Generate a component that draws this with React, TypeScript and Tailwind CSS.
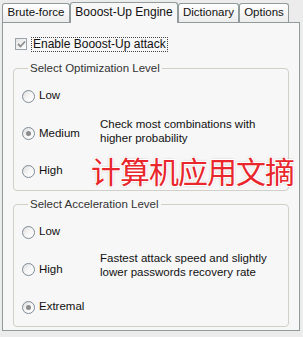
import React from 'react';

const tabs = [
    { label: 'Brute-force', w: 'w-[68px]' },
    { label: 'Booost-Up Engine', w: 'w-[108px]', active: true },
    { label: 'Dictionary', w: 'w-[61px]' },
    { label: 'Options', w: 'w-[50px]' },
];

function Radio({ checked }: { checked?: boolean }) {
    return (
        <span className="w-[13px] h-[13px] rounded-full border border-[#7f8a96] bg-gradient-to-br from-[#dcdcdc] via-[#f6f6f6] to-white flex items-center justify-center shrink-0">
            {checked && <span className="w-[5px] h-[5px] rounded-full bg-[#8c8c8c]" />}
        </span>
    );
}

function Group({ title, options, desc, descClass }: { title: string; options: { label: string; checked?: boolean }[]; desc: string[]; descClass: string }) {
    return (
        <fieldset className="border border-[#d0d0c8] rounded-[4px] mx-[10px] pl-[8px] pr-2 pt-[14px] pb-[12px]">
            <legend className="ml-[6px] px-[2px] text-[#333] leading-[13px]">{title}</legend>
            <div className="flex flex-col gap-[23.5px]">
                {options.map((o, i) => (
                    <div key={o.label} className="flex items-center h-[14px]">
                        <div className="w-[78px] flex items-center gap-[4px]">
                            <Radio checked={o.checked} />
                            <span>{o.label}</span>
                        </div>
                        {i === 1 && (
                            <div className={`leading-[14px] whitespace-nowrap ${descClass}`}>
                                {desc.map(d => <div key={d}>{d}</div>)}
                            </div>
                        )}
                    </div>
                ))}
            </div>
        </fieldset>
    );
}

export default function App() {
    return (
        <div className="relative w-[303px] h-[337px] bg-[#ececec] pt-[3px] pl-[2px] text-[11.5px] text-[#111] overflow-hidden" style={{ fontFamily: '"Liberation Sans", Arial, sans-serif' }}>
            {/* Tab strip */}
            <div className="flex items-end h-[19px] relative z-10">
                {tabs.map(t => (
                    <div
                        key={t.label}
                        className={
                            t.active
                                ? `${t.w} h-[21px] -mb-[1px] border border-b-0 border-[#919b9c] rounded-t-[3px] bg-[#f7f7f7] flex items-center justify-center pb-[2px] text-[12px]`
                                : `${t.w} h-[19px] border border-b-0 border-[#919b9c] rounded-t-[3px] bg-gradient-to-b from-white to-[#ececec] flex items-center justify-center`
                        }
                    >
                        {t.label}
                    </div>
                ))}
            </div>

            {/* Panel */}
            <div className="w-[298px] h-[309px] border border-[#919b9c] bg-[#f7f7f7] pt-[14px]">
                <div className="flex items-center gap-[5px] pl-[12px] h-[14px]">
                    <span className="w-[12px] h-[12px] border border-[#9aa3ab] bg-gradient-to-br from-[#e4e4e4] to-white flex items-center justify-center">
                        <svg width="9" height="8" viewBox="0 0 9 8">
                            <path d="M1 4 L3.5 6.5 L8 1.5" stroke="#8f8f8f" strokeWidth="1.8" fill="none" />
                        </svg>
                    </span>
                    <span className="outline outline-1 outline-dotted outline-[#444] px-[1px] leading-[13px] text-[12px]">Enable Booost-Up attack</span>
                </div>

                <div className="mt-[11px]">
                    <Group
                        title="Select Optimization Level"
                        options={[{ label: 'Low' }, { label: 'Medium', checked: true }, { label: 'High' }]}
                        desc={['Check most combinations with', 'higher probability']}
                        descClass="-mt-[5px]"
                    />
                </div>
                <div className="mt-[7px]">
                    <Group
                        title="Select Acceleration Level"
                        options={[{ label: 'Low' }, { label: 'High' }, { label: 'Extremal', checked: true }]}
                        desc={['Fastest attack speed and slightly', 'lower passwords recovery rate']}
                        descClass="-mt-[9px]"
                    />
                </div>
            </div>

            {/* Watermark */}
            <div
                className="absolute left-[91px] top-[152px] text-[30px] leading-[36px] tracking-[-1px] text-[#e8262b] [text-shadow:0_0_1px_#fff,1px_1px_0_#fff,-1px_-1px_0_#fff,1px_-1px_0_#fff,-1px_1px_0_#fff,0_0_3px_#999]"
                style={{ fontFamily: '"Noto Sans CJK SC", sans-serif' }}
            >
                计算机应用文摘
            </div>
        </div>
    );
}
